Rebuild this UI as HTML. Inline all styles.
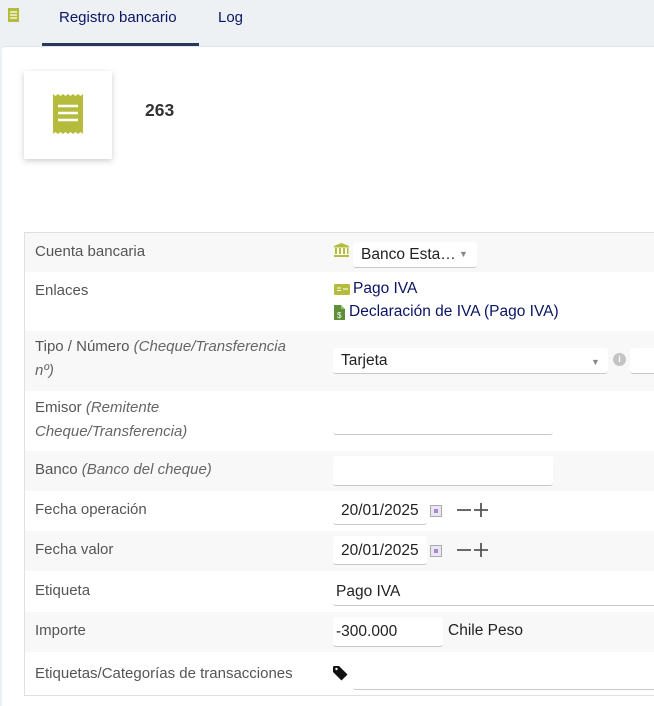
<!DOCTYPE html>
<html><head><meta charset="utf-8"><style>
*{box-sizing:border-box;margin:0;padding:0}
body{width:654px;height:697px;overflow:hidden;background:#eef1f4;font-family:"Liberation Sans",Arial,sans-serif;font-size:14px;color:#333;position:relative}
.a{position:absolute}
.tab{position:absolute;top:9px;font-size:15px;color:#0a1464}
.card{position:absolute;left:2px;top:46px;width:660px;height:660px;background:#fff;border-top:1px solid #e2e4e8;border-radius:4px 0 0 0}
.tbl{position:absolute;left:24px;top:232px;width:640px;border-top:1px solid #e0e0e0;border-left:1px solid #e0e0e0;border-bottom:1px solid #e0e0e0}
.row{position:relative;width:100%}
.g{background:#f8f8f8}
.lb{position:absolute;left:10px;color:#555;line-height:24px;font-size:15px}
.lb i{color:#666}
.inp{position:absolute;background:#fff;border-bottom:1px solid #c8c8c8;border-radius:3px;color:#222;font-size:15.5px;line-height:22px;padding-left:8px}
.cal{position:absolute;left:405px;top:14px;width:12px;height:12px;border:1px solid #aaa;background:#ebe6f4}
.cal div{margin:3px;width:4px;height:4px;background:#a58ad2}
</style></head><body>
<svg class="a" style="left:8px;top:8px" width="11" height="14" viewBox="0 0 11 14"><path d="M0 0h11v14H0z" fill="#b5bc3c"/><path d="M2 4h7M2 7h7M2 10h7" stroke="#fff" stroke-width="1.3"/></svg>
<div class="tab" style="left:59px">Registro bancario</div>
<div class="a" style="left:42px;top:43px;width:157px;height:3px;background:#28385a"></div>
<div class="tab" style="left:218px">Log</div>
<div class="card"></div>
<div class="a" style="left:24px;top:71px;width:88px;height:88px;background:#fff;box-shadow:0 2px 6px rgba(0,0,0,.2)"></div>
<svg class="a" style="left:53px;top:94px" width="30" height="40" viewBox="0 0 30 40"><path d="M0 0l2.5 2 2.5-2 2.5 2 2.5-2 2.5 2 2.5-2 2.5 2 2.5-2 2.5 2 2.5-2 2.5 2 2.5-2v40l-2.5-2-2.5 2-2.5-2-2.5 2-2.5-2-2.5 2-2.5-2-2.5 2-2.5-2-2.5 2-2.5-2-2.5 2z" fill="#b5bc3c"/><path d="M5 12h20M5 19h20M5 26h20" stroke="#fff" stroke-width="2.5"/></svg>
<div class="a" style="left:145px;top:100px;font-weight:bold;font-size:17.5px;color:#333">263</div>
<div class="tbl">
<div class="row g" style="height:39px"><div class="lb" style="top:7px">Cuenta bancaria</div>
<svg class="a" style="left:309px;top:10px" width="15" height="14" viewBox="0 0 15 14"><path d="M7.5 0L0 3v1.5h15V3z M1 5h2v6H1zM5 5h2v6H5zM9 5h2v6H9zM13 5h1.5v6H13zM0 12h15v2H0z" fill="#b5bc3c"/></svg>
<div class="inp" style="left:328px;top:9px;width:124px;height:26px;line-height:25px;font-size:15.5px">Banco Esta…<span style="position:absolute;left:106px;top:0;color:#888;font-size:9px">▼</span></div></div>
<div class="row" style="height:59px"><div class="lb" style="top:7px">Enlaces</div>
<svg class="a" style="left:309px;top:12px" width="16" height="11" viewBox="0 0 16 11"><rect width="16" height="11" rx="1.5" fill="#b5bc3c"/><path d="M3 4h4M3 6.5h4M9 5h5" stroke="#fff" stroke-width="1"/></svg>
<div class="a" style="left:328px;top:7px;color:#0a1464;font-size:15.5px;line-height:20px">Pago IVA</div>
<svg class="a" style="left:309px;top:33px" width="11" height="15" viewBox="0 0 11 15"><path d="M0 0h7l4 4v11H0z" fill="#5f8f3a"/><path d="M7 0v4h4" fill="#a0c070"/><text x="3" y="13" font-size="8" fill="#fff" font-family="Liberation Sans">$</text></svg>
<div class="a" style="left:324px;top:30px;color:#0a1464;font-size:15.5px;line-height:20px">Declaración de IVA (Pago IVA)</div></div>
<div class="row g" style="height:60px"><div class="lb" style="top:4px">Tipo / Número <i>(Cheque/Transferencia<br>nº)</i></div>
<div class="inp" style="left:308px;top:17px;width:275px;height:26px;line-height:26px">Tarjeta<span style="position:absolute;left:258px;top:1px;color:#888;font-size:9px">▼</span></div>
<div class="a" style="left:588px;top:22px;width:13px;height:13px;border-radius:50%;background:#c4c4c4;color:#fff;font-size:9px;font-weight:bold;text-align:center;line-height:13px">i</div>
<div class="inp" style="left:605px;top:17px;width:40px;height:26px"></div></div>
<div class="row" style="height:60px"><div class="lb" style="top:5px">Emisor <i>(Remitente<br>Cheque/Transferencia)</i></div>
<div class="inp" style="left:308px;top:20px;width:220px;height:24px"></div></div>
<div class="row g" style="height:40px"><div class="lb" style="top:7px">Banco <i>(Banco del cheque)</i></div>
<div class="inp" style="left:308px;top:5px;width:220px;height:30px"></div></div>
<div class="row" style="height:40px"><div class="lb" style="top:7px">Fecha operación</div>
<div class="inp" style="left:308px;top:5px;width:94px;height:29px;line-height:29px;padding-left:8px">20/01/2025</div>
<div class="cal"><div></div></div>
<svg class="a" style="left:432px;top:11px" width="34" height="16" viewBox="0 0 34 16"><path d="M0 8h14M17 8h14M24 1v14" stroke="#555" stroke-width="1.8"/></svg></div>
<div class="row g" style="height:40px"><div class="lb" style="top:7px">Fecha valor</div>
<div class="inp" style="left:308px;top:5px;width:94px;height:29px;line-height:29px">20/01/2025</div>
<div class="cal"><div></div></div>
<svg class="a" style="left:432px;top:11px" width="34" height="16" viewBox="0 0 34 16"><path d="M0 8h14M17 8h14M24 1v14" stroke="#555" stroke-width="1.8"/></svg></div>
<div class="row" style="height:41px"><div class="lb" style="top:8px">Etiqueta</div>
<div class="inp" style="left:308px;top:6px;width:340px;height:29px;line-height:29px;padding-left:3px">Pago IVA</div></div>
<div class="row g" style="height:40px"><div class="lb" style="top:7px">Importe</div>
<div class="inp" style="left:308px;top:5px;width:110px;height:30px;line-height:30px;padding-left:3px">-300.000</div>
<div class="a" style="left:423px;top:10px;color:#222;font-size:15.5px">Chile Peso</div></div>
<div class="row" style="height:43px"><div class="lb" style="top:10px">Etiquetas/Categorías de transacciones</div>
<svg class="a" style="left:308px;top:13px" width="16" height="16" viewBox="0 0 16 16"><path d="M0 1.5V7l8.5 8.5 6-6L6 1H1.5z" fill="#111"/><circle cx="3.5" cy="4" r="1.2" fill="#fff"/></svg>
<div class="inp" style="left:328px;top:8px;width:320px;height:30px"></div></div>
</div>
</body></html>
